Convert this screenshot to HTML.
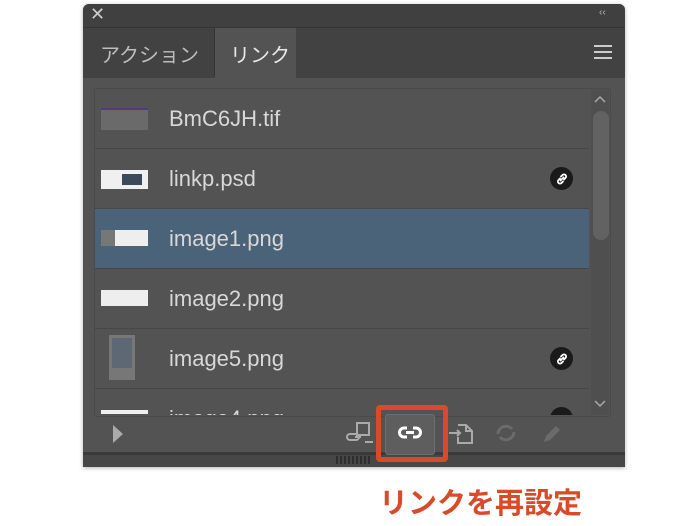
<!DOCTYPE html>
<html><head><meta charset="utf-8"><style>
body{margin:0;width:700px;height:526px;background:#fff;position:relative;overflow:hidden;font-family:"Liberation Sans","Noto Sans CJK JP",sans-serif}
.a{position:absolute}
.row{position:absolute;left:95px;width:494px;height:59px;border-bottom:1px solid #474747}
.row span{position:absolute;left:74px;top:17px;font-size:22px;color:#d8d8d8}
.th{position:absolute}
.lk{position:absolute;left:455px;top:18px;width:23px;height:23px;border-radius:50%;background:#1a1a1a}
</style></head><body>
<div class="a" style="left:83px;top:4px;width:542px;height:463px;background:#535353;border-radius:6px 6px 0 0;box-shadow:0 1px 4px rgba(0,0,0,.3)"></div>
<div class="a" style="left:83px;top:4px;width:542px;height:23px;background:#404040;border-radius:6px 6px 0 0"></div>
<div class="a" style="left:90px;top:4px;color:#ccc;font-size:18px">✕</div>
<div class="a" style="left:599px;top:7px;color:#bbb;font-size:10px">‹‹</div>
<div class="a" style="left:83px;top:27px;width:542px;height:50px;background:#424242;border-top:1px solid #363636"></div>
<div class="a" style="left:83px;top:28px;width:131px;height:48px;border-right:1px solid #333"></div>
<div class="a" style="left:215px;top:28px;width:81px;height:50px;background:#535353"></div>
<div class="a" style="left:100px;top:39px;color:#bdbdbd;font-size:20px">アクション</div>
<div class="a" style="left:230px;top:39px;color:#e8e8e8;font-size:20px">リンク</div>
<div class="a" style="left:594px;top:45px;width:18px;height:2px;background:#ccc;box-shadow:0 6px 0 #ccc,0 12px 0 #ccc"></div>
<div class="a" style="left:94px;top:88px;width:515px;height:327px;border:1px solid #4a4a4a;border-radius:3px;overflow:hidden">
</div>
<div class="a" style="left:95px;top:89px;width:494px;height:326px;overflow:hidden">
<div class="row" style="left:0;top:0"><div class="th" style="left:6px;top:19px;width:47px;height:20px;background:#6a6a6a;border-top:2px solid #553a7a"></div><span>BmC6JH.tif</span></div>
<div class="row" style="left:0;top:60px"><div class="th" style="left:6px;top:21px;width:47px;height:19px;background:#f0f0f0"><div style="position:absolute;left:21px;top:4px;width:20px;height:11px;background:#3b4a5a"></div></div><span>linkp.psd</span><div class="lk"></div></div>
<div class="row" style="left:0;top:120px;background:#4a6378"><div class="th" style="left:6px;top:21px;width:47px;height:16px;background:#eee"><div style="position:absolute;left:0;top:0;width:14px;height:16px;background:#777"></div></div><span>image1.png</span></div>
<div class="row" style="left:0;top:180px"><div class="th" style="left:6px;top:21px;width:47px;height:16px;background:#eee"></div><span>image2.png</span></div>
<div class="row" style="left:0;top:240px"><div class="th" style="left:14px;top:6px;width:26px;height:45px;background:#777"><div style="position:absolute;left:3px;top:3px;width:20px;height:30px;background:#5e6875"></div></div><span>image5.png</span><div class="lk"></div></div>
<div class="row" style="left:0;top:300px"><div class="th" style="left:6px;top:21px;width:47px;height:4px;background:#eee"></div><span>image4.png</span><div class="lk"></div></div>
</div>
<svg class="a" style="left:554px;top:171px" width="16" height="16" viewBox="0 0 16 16"><g fill="none" stroke="#fff" stroke-width="1.8" stroke-linecap="round"><path d="M6.5 9.5l3-3M6 7.5L4.5 9a2.1 2.1 0 003 3L9 10.5M10 8.5L11.5 7a2.1 2.1 0 00-3-3L7 5.5"/></g></svg>
<svg class="a" style="left:554px;top:351px" width="16" height="16" viewBox="0 0 16 16"><g fill="none" stroke="#fff" stroke-width="1.8" stroke-linecap="round"><path d="M6.5 9.5l3-3M6 7.5L4.5 9a2.1 2.1 0 003 3L9 10.5M10 8.5L11.5 7a2.1 2.1 0 00-3-3L7 5.5"/></g></svg>
<div class="a" style="left:591px;top:89px;width:18px;height:326px;background:#4f4f4f"></div>
<div class="a" style="left:593px;top:111px;width:16px;height:129px;background:#626262;border-radius:8px"></div>
<svg class="a" style="left:592px;top:94px" width="16" height="10"><path d="M3 8l5-5 5 5" fill="none" stroke="#aaa" stroke-width="1.5"/></svg>
<svg class="a" style="left:592px;top:399px" width="16" height="10"><path d="M3 2l5 5 5-5" fill="none" stroke="#aaa" stroke-width="1.5"/></svg>
<svg class="a" style="left:112px;top:424px" width="12" height="20"><path d="M1 1l10 9-10 9z" fill="#aaa"/></svg>
<svg class="a" style="left:345px;top:420px" width="30" height="26"><g fill="none" stroke="#aaa" stroke-width="2"><rect x="12" y="3" width="12" height="12"/><path d="M5 14h6a3 3 0 010 6H5a3 3 0 010-6M10 17h6M20 22h8"/></g></svg>
<div class="a" style="left:83px;top:452px;width:542px;height:3px;background:#3a3a3a"></div>
<div class="a" style="left:83px;top:455px;width:542px;height:12px;background:#474747"></div>
<div class="a" style="left:336px;top:456px;width:34px;height:8px;background:repeating-linear-gradient(90deg,#2e2e2e 0 2px,transparent 2px 4px)"></div>
<div class="a" style="left:385px;top:414px;width:48px;height:39px;background:#5e5e5e;border:1px solid #6e6e6e;border-radius:3px"></div>
<svg class="a" style="left:398px;top:425px" width="24" height="16"><g fill="none" stroke="#fff" stroke-width="3"><path d="M9 3H6a4.5 4.5 0 000 9h3M15 3h3a4.5 4.5 0 010 9h-3M8 7.5h8"/></g></svg>
<div class="a" style="left:376px;top:405px;width:62px;height:47px;border:5px solid #d84a2a;border-radius:4px"></div>
<svg class="a" style="left:448px;top:421px" width="26" height="24"><g fill="none" stroke="#aaa" stroke-width="2"><path d="M10 4h8l6 6v12H10v-6M18 4v6h6"/><path d="M1 12h11M9 9l3 3-3 3"/></g></svg>
<svg class="a" style="left:494px;top:422px" width="24" height="22"><g fill="none" stroke="#6b6b6b" stroke-width="3"><path d="M4 12a8 8 0 0114-5M20 10a8 8 0 01-14 5"/></g></svg>
<svg class="a" style="left:540px;top:422px" width="24" height="24"><path d="M4 20l2-6 10-10 4 4-10 10z" fill="#6b6b6b"/></svg>
<div class="a" style="left:379px;top:480px;color:#d84a2a;font-size:29px;font-weight:bold;letter-spacing:0px">リンクを再設定</div>
</body></html>
